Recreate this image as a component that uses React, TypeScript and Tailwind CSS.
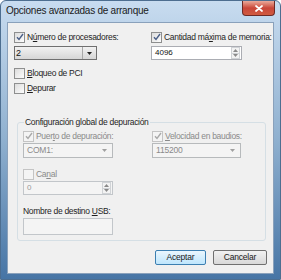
import type { ReactNode } from 'react';

const font = { fontFamily: '"Liberation Sans", Arial, sans-serif' };

function CheckBox({ checked, disabled }: { checked?: boolean; disabled?: boolean }) {
  return (
    <span
      className={`flex h-[11px] w-[11px] shrink-0 items-center justify-center border ${
        disabled ? 'border-[#c4c4c4] bg-[#f4f4f4]' : 'border-[#8e8f8f] bg-gradient-to-br from-[#dcdcdc] to-[#fdfdfd]'
      }`}
    >
      {checked ? (
        <svg width="8" height="8" viewBox="0 0 8 8">
          <path d="M1 4.2 L3 6.5 L7 1" fill="none" stroke={disabled ? '#a9a9a9' : '#4a5f87'} strokeWidth="1.4" />
        </svg>
      ) : null}
    </span>
  );
}

function Check({ children, checked, disabled }: { children: ReactNode; checked?: boolean; disabled?: boolean }) {
  return (
    <div className="flex h-[12px] items-center gap-[2px]">
      <CheckBox checked={checked} disabled={disabled} />
      <span
        className={`whitespace-nowrap text-[8.5px] leading-none tracking-[-0.3px] ${
          disabled ? 'text-[#8a8a8a]' : 'text-[#1e1e1e]'
        }`}
      >
        {children}
      </span>
    </div>
  );
}

function Arrow({ color = '#222' }: { color?: string }) {
  return (
    <svg width="5" height="3" viewBox="0 0 5 3">
      <path d="M0 0 H5 L2.5 3 Z" fill={color} />
    </svg>
  );
}

function Combo({ value, w, disabled }: { value: string; w: string; disabled?: boolean }) {
  if (disabled)
    return (
      <div className={`mt-[1px] flex h-[15px] ${w} items-center justify-between border border-[#b7babc] bg-[#f4f4f4] pl-[3px] pr-[5px]`}>
        <span className="text-[8.5px] leading-none tracking-[-0.2px] text-[#8a8a8a]">{value}</span>
        <Arrow color="#a0a0a0" />
      </div>
    );
  return (
    <div className={`mt-[3px] flex h-[14px] ${w} items-center border border-[#707070] bg-gradient-to-b from-[#f2f2f2] to-[#d6d6d6] pl-[1px]`}>
      <span className="flex-1 text-[9px] leading-none text-[#111]">{value}</span>
      <span className="flex h-full w-[14px] items-center justify-center border-l border-[#a8a8a8]">
        <Arrow />
      </span>
    </div>
  );
}

function Spin({ value, w, disabled, className }: { value: string; w: string; disabled?: boolean; className: string }) {
  return (
    <div
      className={`flex h-[14px] ${w} ${className} items-center border ${
        disabled ? 'border-[#c2c6ca] bg-[#f4f4f4]' : 'border-[#abadb3] bg-white'
      }`}
    >
      <span className={`flex-1 pl-[3px] text-[8px] leading-none ${disabled ? 'text-[#9a9a9a]' : 'text-[#111]'}`}>{value}</span>
      <span className="mr-[1px] flex h-[12px] w-[9px] flex-col border border-[#d0d3d6] bg-[#f3f3f3]">
        <span className="flex flex-1 items-center justify-center">
          <svg width="5" height="3" viewBox="0 0 5 3">
            <path d="M0 3 H5 L2.5 0 Z" fill="#8a8a8a" />
          </svg>
        </span>
        <span className="flex flex-1 items-center justify-center border-t border-[#d0d3d6]">
          <Arrow color="#8a8a8a" />
        </span>
      </span>
    </div>
  );
}

export default function App() {
  return (
    <div
      style={font}
      className="flex h-[280px] w-[281px] flex-col rounded-t-[6px] border border-[#4d6e90] bg-gradient-to-b from-[#c8dcf0] via-[#8fb0cf] to-[#4775a5]"
    >
      <div className="flex h-[21px] items-start justify-between">
        <span className="ml-[5px] mt-[5px] whitespace-nowrap text-[10px] leading-none tracking-[-0.25px] text-[#1a1a1a]">
          Opciones avanzadas de arranque
        </span>
        <div className="mr-[5px] flex h-[15px] w-[33px] items-center justify-center rounded-b-[4px] border border-t-0 border-[#6d2a25] bg-gradient-to-b from-[#e9a99b] via-[#c9463a] to-[#d05a3f]">
          <svg width="8" height="7" viewBox="0 0 8 7">
            <path d="M1 1 L7 6 M7 1 L1 6" stroke="white" strokeWidth="1.7" strokeLinecap="round" />
          </svg>
        </div>
      </div>

      <div className="mx-[6px] mb-[5px] flex flex-1 flex-col border border-[#8aa1bb] bg-[#f0f0f0]">
        <div className="flex pl-[6px] pt-[8px]">
          <div className="flex w-[137px] flex-col">
            <Check checked>
              N<u>ú</u>mero de procesadores:
            </Check>
            <Combo value="2" w="w-[83px]" />
          </div>
          <div className="flex flex-col">
            <Check checked>
              Cantidad má<u>x</u>ima de memoria:
            </Check>
            <Spin value="4096" w="w-[91px]" className="mt-[3px]" />
          </div>
        </div>

        <div className="mt-[7px] pl-[6px]">
          <Check>
            <u>B</u>loqueo de PCI
          </Check>
        </div>
        <div className="mt-[3px] pl-[6px]">
          <Check>
            <u>D</u>epurar
          </Check>
        </div>

        <fieldset className="ml-[9px] mr-[7px] mt-[22px] rounded-[3px] border border-[#d5dfe5] pb-[5px] pl-[5px]">
          <legend className="ml-[1px] whitespace-nowrap px-[1px] text-[8.5px] leading-[12px] tracking-[-0.3px] text-[#1e1e1e]">
            Configuración global de depuración
          </legend>
          <div className="mt-[2px] flex">
            <div className="flex w-[129px] flex-col">
              <Check checked disabled>
                Puer<u>t</u>o de depuración:
              </Check>
              <Combo value="COM1:" w="w-[90px]" disabled />
            </div>
            <div className="flex flex-col">
              <Check checked disabled>
                <u>V</u>elocidad en baudios:
              </Check>
              <Combo value="115200" w="w-[89px]" disabled />
            </div>
          </div>
          <div className="mt-[10px]">
            <Check disabled>
              Ca<u>n</u>al
            </Check>
          </div>
          <Spin value="0" w="w-[90px]" disabled className="mt-[1px]" />
          <div className="mt-[10px] flex h-[12px] items-center">
            <span className="whitespace-nowrap text-[8.5px] leading-none tracking-[-0.3px] text-[#1e1e1e]">
              Nombre de destino <u>U</u>SB:
            </span>
          </div>
          <div className="mt-[1px] h-[17px] w-[90px] border border-[#c2c6ca] bg-[#f4f4f4]" />
        </fieldset>

        <div className="mt-[9px] flex justify-end gap-[7px] pr-[6px]">
          <button className="flex h-[15px] w-[51px] items-center justify-center rounded-[2px] border border-[#3c7fb1] bg-gradient-to-b from-[#eaf6fd] to-[#bee6fd] text-[8.5px] leading-none tracking-[-0.2px] text-[#1a1a1a]">
            Aceptar
          </button>
          <button className="flex h-[15px] w-[54px] items-center justify-center rounded-[2px] border border-[#707070] bg-gradient-to-b from-[#f2f2f2] to-[#d8d8d8] text-[8.5px] leading-none tracking-[-0.2px] text-[#1a1a1a]">
            Cancelar
          </button>
        </div>
      </div>
    </div>
  );
}
